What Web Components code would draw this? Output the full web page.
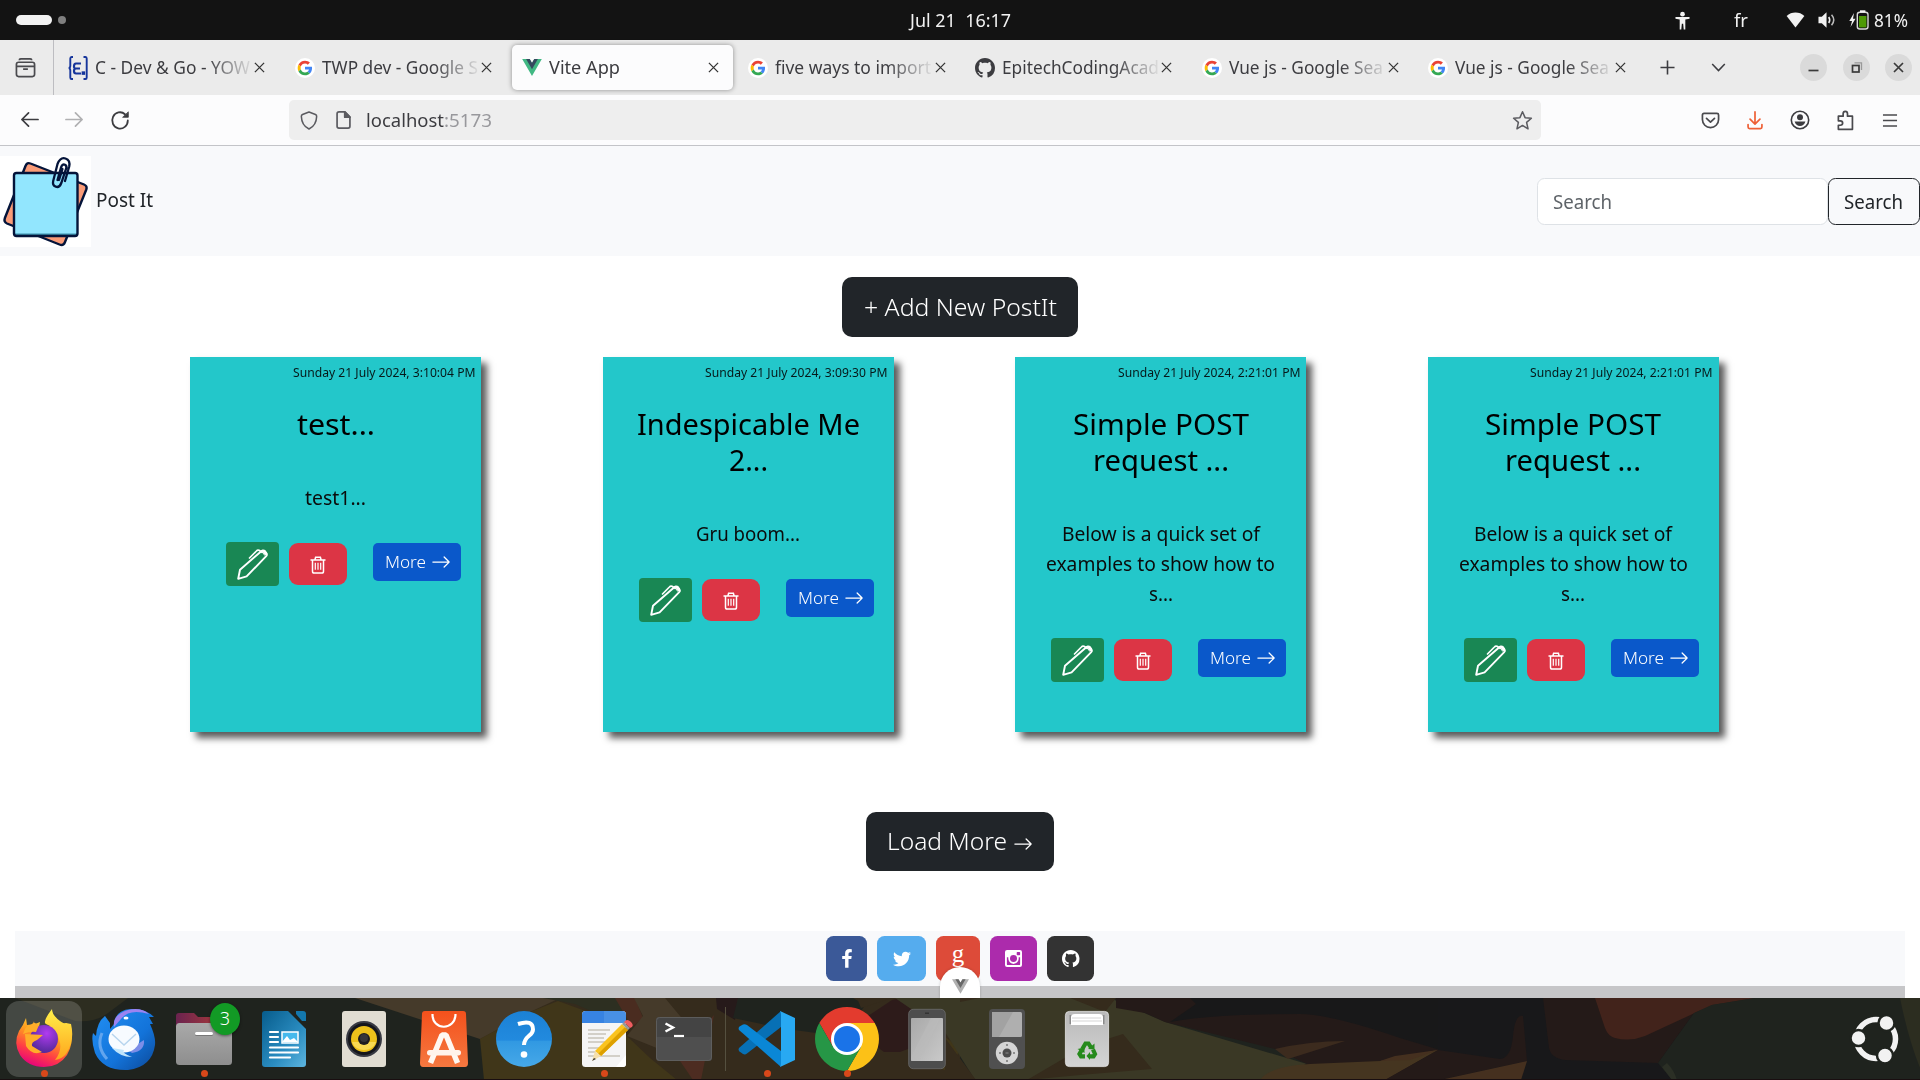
<!DOCTYPE html>
<html lang="en">
<head>
<meta charset="utf-8">
<title>Vite App</title>
<style>
html,body{margin:0;height:100%;overflow:hidden}
body{font-family:"Noto Sans","Open Sans",sans-serif;background:#fff}
</style>
</head>
<body>
<desktop-screen></desktop-screen>
<script>
const ICONS = {
  google: '<svg viewBox="0 0 24 24"><circle cx="12" cy="12" r="12" fill="#fff"/><g transform="translate(3.2 3.2) scale(.367)"><path fill="#EA4335" d="M24 9.5c3.54 0 6.71 1.22 9.21 3.6l6.85-6.85C35.9 2.38 30.47 0 24 0 14.62 0 6.51 5.38 2.56 13.22l7.98 6.19C12.43 13.72 17.74 9.5 24 9.5z"/><path fill="#4285F4" d="M46.98 24.55c0-1.57-.15-3.09-.38-4.55H24v9.02h12.94c-.58 2.96-2.26 5.48-4.78 7.18l7.73 6c4.51-4.18 7.09-10.36 7.09-17.65z"/><path fill="#FBBC05" d="M10.53 28.59c-.48-1.45-.76-2.99-.76-4.59s.27-3.14.76-4.59l-7.98-6.19C.92 16.46 0 20.12 0 24c0 3.88.92 7.54 2.56 10.78l7.97-6.19z"/><path fill="#34A853" d="M24 48c6.48 0 11.93-2.13 15.89-5.81l-7.73-6c-2.15 1.45-4.92 2.3-8.16 2.3-6.26 0-11.57-4.22-13.47-9.91l-7.98 6.19C6.51 42.62 14.62 48 24 48z"/></g></svg>',
  github: '<svg viewBox="0 0 16 16"><path fill="currentColor" d="M8 0C3.58 0 0 3.58 0 8c0 3.54 2.29 6.53 5.47 7.59.4.07.55-.17.55-.38 0-.19-.01-.82-.01-1.49-2.01.37-2.53-.49-2.69-.94-.09-.23-.48-.94-.82-1.13-.28-.15-.68-.52-.01-.53.63-.01 1.08.58 1.23.82.72 1.21 1.87.87 2.33.66.07-.52.28-.87.51-1.07-1.78-.2-3.64-.89-3.64-3.95 0-.87.31-1.59.82-2.15-.08-.2-.36-1.02.08-2.12 0 0 .67-.21 2.2.82.64-.18 1.32-.27 2-.27s1.36.09 2 .27c1.53-1.04 2.2-.82 2.2-.82.44 1.1.16 1.92.08 2.12.51.56.82 1.27.82 2.15 0 3.07-1.87 3.75-3.65 3.95.29.25.54.73.54 1.48 0 1.07-.01 1.93-.01 2.2 0 .21.15.46.55.38A8.01 8.01 0 0 0 16 8c0-4.42-3.58-8-8-8z"/></svg>',
  epitech: '<svg viewBox="0 0 20 24" fill="none" stroke="#16359b" stroke-width="1.9"><path d="M5 1H3.6Q2.300 1 2.300 2.600V9.400Q2.300 12 .6 12 2.300 12 2.300 14.600V21.400Q2.300 23 3.600 23H5M15.500 1H17.500Q18.700 1 18.700 2.600V21.400Q18.700 23 17.500 23H15.500"/><path d="M13 7.500H8Q6 7.500 6 10.200T8 12.500H12M8 12.500Q6 12.500 6 15T8 17.500H13" stroke-width="2.200"/><rect x="14.600" y="16.300" width="1.600" height="1.600"/></svg>',
  vue: '<svg viewBox="0 0 261.76 226.69"><path fill="#41b883" d="M161.096.001l-30.225 52.351L100.647.001H-.005l130.877 226.688L261.749.001z"/><path fill="#34495e" d="M161.096.001l-30.225 52.351L100.647.001H52.346l78.526 136.01L209.398.001z"/></svg>',
  vueGray: '<svg viewBox="0 0 261.76 226.69"><path fill="#b0b0b0" d="M161.096.001l-30.225 52.351L100.647.001H-.005l130.877 226.688L261.749.001z"/><path fill="#686868" d="M161.096.001l-30.225 52.351L100.647.001H52.346l78.526 136.01L209.398.001z"/></svg>',
  close: '<svg viewBox="0 0 12 12"><path d="M1 1l10 10M11 1L1 11" stroke="#333" stroke-width="1.4"/></svg>',
  archive: '<svg viewBox="0 0 22 22" fill="none" stroke="#4a4a4e" stroke-width="1.8"><path d="M4.500 3.300Q4.500 2 6 2H16Q17.500 2 17.500 3.300"/><rect x="1.500" y="5.500" width="19" height="15" rx="2.300"/><path d="M1.500 9.800H20.500M8.500 12.600H13.500"/></svg>',
  back: '<svg viewBox="0 0 20 20" fill="none" stroke="#3c3c40" stroke-width="1.8" stroke-linecap="round" stroke-linejoin="round"><path d="M19 10H2M9 3L2 10l7 7"/></svg>',
  forward: '<svg viewBox="0 0 20 20" fill="none" stroke="#b0b0b2" stroke-width="1.800" stroke-linecap="round" stroke-linejoin="round"><path d="M1 10h17M11 3l7 7-7 7"/></svg>',
  reload: '<svg viewBox="0 0 20 20" fill="none" stroke="#3c3c40" stroke-width="1.800" stroke-linecap="round"><path d="M15 4.200A7.800 8.200 0 1 0 17.800 10.500"/><path d="M18.300 2.200V7.300H13Z" fill="#3c3c40" stroke-width=".8" stroke-linejoin="round"/></svg>',
  shield: '<svg viewBox="0 0 20 22" fill="none" stroke="#5b5b60" stroke-width="1.700" stroke-linejoin="round"><path d="M10 1.500L17.200 4.300Q18.600 4.900 18.500 6.500C18.300 13 15 18 10 20.500 5 18 1.700 13 1.500 6.500Q1.400 4.900 2.800 4.300Z"/></svg>',
  page: '<svg viewBox="0 0 18 20" fill="none" stroke="#5b5b60" stroke-width="1.800" stroke-linejoin="round"><path d="M4 1.500H10.500L15.800 6.800V16.500Q15.800 18.500 13.800 18.500H4.200Q2.200 18.500 2.200 16.500V3.500Q2.200 1.500 4.200 1.500Z"/><path d="M10.300 1.500V7H15.800Z" fill="#5b5b60"/></svg>',
  star: '<svg viewBox="0 0 22 22" fill="none" stroke="#5b5b60" stroke-width="1.600" stroke-linejoin="round"><path d="M11 1.800L13.700 8 20.300 8.600 15.300 13 16.800 19.700 11 16.200 5.200 19.700 6.700 13 1.700 8.600 8.300 8Z"/></svg>',
  pocket: '<svg viewBox="0 0 20 20" fill="none" stroke="#4a4a4e" stroke-width="1.800" stroke-linecap="round" stroke-linejoin="round"><path d="M3.200 2.500H16.800Q18.500 2.500 18.500 4.200V9A8.500 8.500 0 0 1 1.500 9V4.200Q1.500 2.500 3.200 2.500Z"/><path d="M5.800 7.700L10 11.700 14.200 7.700"/></svg>',
  download: '<svg viewBox="0 0 20 22" fill="none" stroke="#ee6036" stroke-width="1.900" stroke-linecap="round" stroke-linejoin="round"><path d="M10 1.500V14.500M4.500 9.500L10 15 15.500 9.500M2.300 15.500V18.200Q2.300 20 4 20H16Q17.700 20 17.700 18.200V15.500"/></svg>',
  account: '<svg viewBox="0 0 20 20"><circle cx="10" cy="10" r="8.700" fill="none" stroke="#3c3c40" stroke-width="1.600"/><circle cx="10" cy="7.300" r="3" fill="#3c3c40"/><path d="M4.600 11.600H15.400Q14 16 10 16T4.600 11.600Z" fill="#3c3c40"/></svg>',
  ext: '<svg viewBox="0 0 20 22" fill="none" stroke="#4a4a4e" stroke-width="1.800" stroke-linejoin="round"><path d="M2.500 6.500H7.500V4Q7.500 1.300 9.800 1.300T12.100 4V6.500H17.300V20.300H2.500V16H4.500Q7 16 7 13.700T4.500 11.300H2.500Z"/></svg>',
  menu: '<svg viewBox="0 0 16 16"><path d="M.5 2.200H15.500M.5 8H15.500M.5 13.800H15.500" stroke="#4a4a4e" stroke-width="1.600"/></svg>',
  plus: '<svg viewBox="0 0 16 16"><path d="M8 .5V15.500M.5 8H15.500" stroke="#3c3c40" stroke-width="1.700"/></svg>',
  chevron: '<svg viewBox="0 0 16 10"><path d="M1 1.200L8 8.500 15 1.200" fill="none" stroke="#3c3c40" stroke-width="1.700"/></svg>',
  a11y: '<svg viewBox="0 0 16 20" fill="#f2f2f2"><circle cx="8" cy="3.200" r="2.500"/><path d="M.5 6.300H15.500V8.200L11 9V19.500H9.300L8.700 13.500H7.300L6.700 19.500H5V9L.5 8.200Z"/></svg>',
  wifi: '<svg viewBox="0 0 20 17"><path d="M10 16.500L.6 4.200Q4.600.6 10 .6T19.400 4.200Z" fill="#f2f2f2"/></svg>',
  volume: '<svg viewBox="0 0 19 18" fill="#f2f2f2"><path d="M.5 5.500H4L9 .7V17.300L4 12.500H.5Z"/><path d="M11.300 5.800Q13.500 9 11.300 12.200" fill="none" stroke="#f2f2f2" stroke-width="1.600"/><path d="M14.300 3.500Q19 9 14.300 14.500" fill="none" stroke="#bbb" stroke-width="1.600"/></svg>',
  battery: '<svg viewBox="0 0 20 20"><path d="M5 3L.3 11H3L1.500 17 6.500 8.800H4Z" fill="#f2f2f2"/><rect x="8.300" y="2.300" width="10.700" height="16.700" rx="2.500" fill="#131313" stroke="#d8d8d8" stroke-width="1.400"/><rect x="11" y=".3" width="5.400" height="2" fill="#f2f2f2"/><rect x="10" y="6" width="7.400" height="11.400" fill="#4e9a06"/></svg>',
  postit: '<svg viewBox="0 0 91 91"><rect width="91" height="91" fill="#fff"/><g stroke="#04143a" stroke-width="2.400" stroke-linejoin="round"><path d="M30.500 7.500L84 28.500Q87.500 30 86.300 33.500L65 86Q63.500 90 59.500 88.500L7 67.500Q3.500 66 4.900 62L25.500 10Q27 6 30.500 7.500Z" fill="#fa9c78"/></g><rect x="14" y="17" width="63.500" height="63" rx="2.500" fill="#92e6fe"/><path d="M14.500 78.300H77" stroke="#3d8fab" stroke-width="1.500"/><rect x="14" y="17" width="63.500" height="63" rx="2.500" fill="none" stroke="#04143a" stroke-width="2.400"/><g fill="none" stroke="#04143a" stroke-width="2.300" stroke-linecap="round"><path d="M57.500 24L61 11.500Q62.500 7.500 65 8.800T65.800 13.500L61.300 27Q59.500 32 55.800 30.700T53.200 25L57.500 8Q60.500.8 65.500 2.500T69.200 10.500L65 25M59 24L62.500 13"/></g></svg>',
  arrow: '<svg viewBox="0 0 16 16"><path fill="currentColor" fill-rule="evenodd" d="M1 8a.5.5 0 0 1 .5-.5h11.793L10.146 4.354a.5.5 0 1 1 .708-.708l4 4a.5.5 0 0 1 0 .708l-4 4a.5.5 0 0 1-.708-.708L13.293 8.500H1.500A.5.5 0 0 1 1 8z"/></svg>',
  pen: '<svg viewBox="0 0 31 31" fill="none" stroke="#fff" stroke-width="1.900" stroke-linejoin="round" stroke-linecap="round"><path d="M1.200 29.800L3 20.800 24.300 2.200Q26 .8 27.500 2.200L29.300 4Q30.500 5.600 29.200 7.200L9.600 27.400Z"/><path d="M25 3.300L22 1.300Q20.500.8 19.400 2L12.500 9" stroke-width="1.700"/><path d="M24.500 1.500L28 1.300 29.800 4.500 28 6Z" fill="#fff" stroke-width="1"/></svg>',
  trash: '<svg viewBox="0 0 16 18" fill="none" stroke="#fff" stroke-width="1.500"><path d="M.5 3.900H15.500M5 3.500L5.600 1.200H10.400L11 3.500M2.500 4V15.200Q2.500 17.100 4 17.100H12Q13.500 17.100 13.500 15.200V4"/><path d="M5.300 6.800V13.800M8 6.800V13.800M10.700 6.800V13.800" stroke-width="1.200"/></svg>',
  facebook: '<svg viewBox="0 0 10 19"><path fill="#fff" d="M9.800.2V3.200H8.100Q6.500 3.200 6.500 4.800V6.900H9.700L9.300 10.100H6.500V18.700H3.100V10.100H.2V6.900H3.100V4.500Q3.100 0 7.400 0Q9 0 9.800.2Z"/></svg>',
  twitter: '<svg viewBox="0 0 512 512"><path fill="#fff" d="M459.370 151.716c.325 4.548.325 9.097.325 13.645 0 138.720-105.583 298.558-298.558 298.558-59.452 0-114.680-17.219-161.137-47.106 8.447.974 16.568 1.299 25.340 1.299 49.055 0 94.213-16.568 130.274-44.832-46.132-.975-84.792-31.188-98.112-72.772 6.498.974 12.995 1.624 19.818 1.624 9.421 0 18.843-1.300 27.614-3.573-48.081-9.747-84.143-51.980-84.143-102.985v-1.299c13.969 7.797 30.214 12.670 47.431 13.319-28.264-18.843-46.781-51.005-46.781-87.391 0-19.492 5.197-37.360 14.294-52.954 51.655 63.675 129.300 105.258 216.365 109.807-1.624-7.797-2.599-15.918-2.599-24.040 0-57.828 46.782-104.934 104.934-104.934 30.213 0 57.502 12.670 76.670 33.137 23.715-4.548 46.456-13.320 66.599-25.340-7.798 24.366-24.366 44.833-46.132 57.827 21.117-2.273 41.584-8.122 60.426-16.243-14.292 20.791-32.161 39.308-52.628 54.253z"/></svg>',
  instagram: '<svg viewBox="0 0 18 18"><path fill="#fff" fill-rule="evenodd" d="M2.200 0H15.800Q18 0 18 2.200V15.800Q18 18 15.800 18H2.200Q0 18 0 15.800V2.200Q0 0 2.200 0ZM2 7.600V15Q2 16 3 16H15Q16 16 16 15V7.600H14.500Q15 13.800 9 14.700 3 13.800 3.500 7.600ZM13.100 2H15.300Q16 2 16 2.700V4.800Q16 5.500 15.300 5.500H13.100Q12.400 5.500 12.400 4.800V2.700Q12.400 2 13.100 2Z"/><circle cx="9" cy="9" r="4.700" fill="#fff"/><circle cx="9" cy="9" r="3.700" fill="#ac2bac"/></svg>',
  firefox: '<svg viewBox="0 0 64 64"><defs><linearGradient id="a" x1=".75" y1="0" x2=".3" y2="1"><stop offset="0" stop-color="#ffe93e"/><stop offset=".4" stop-color="#ff9a1f"/><stop offset=".72" stop-color="#ff3b47"/><stop offset="1" stop-color="#e4007f"/></linearGradient><radialGradient id="b" cx=".6" cy=".3" r=".8"><stop offset="0" stop-color="#b13bf0"/><stop offset="1" stop-color="#45278d"/></radialGradient><linearGradient id="c" x1="0" y1="0" x2="0" y2="1"><stop offset="0" stop-color="#fff04a"/><stop offset="1" stop-color="#ffa51c"/></linearGradient></defs><path fill="url(#a)" d="M14 11L15 18Q18 17 21 19 24 16 28 15L27 20 45 18 54 16 59 22Q62 36 55 48 47 60 32 60 16 60 8 48 1 36 7 24Q11 19 14 11Z"/><path fill="url(#c)" d="M40 2Q40 8 48 14 54 18 54 16L59 17Q63 34 54 47 50 52 43 53 51 43 47 32 43 20 34 17 30 15 40 2Z"/><circle cx="32" cy="32" r="14" fill="url(#b)"/><path fill="#ffad29" d="M11 27Q18 24 24 25L27 18 21 15Q24 14 20 17 15 18 13 22ZM13 27L31 28 25 33Q19 35 20 39 25 42 30 45 20 49 14 39Z"/></svg>',
  thunderbird: '<svg viewBox="0 0 64 64"><defs><linearGradient id="a" x1="0" y1="0" x2="1" y2="1"><stop offset="0" stop-color="#2290f4"/><stop offset=".6" stop-color="#1373d9"/><stop offset="1" stop-color="#0c4898"/></linearGradient></defs><path d="M22 17Q23 3 39 2 53 1 62 10L57 10 61 17 58 17Q64 30 63 38 60 60 36 63 11 64 3 46-1 34 1 26L4 29Q5 15 13 9L18 16 18 22Z" fill="url(#a)"/><path d="M22 20Q20 8 36 3 49 0 57 7 37 1 29 12Z" fill="#9b83f1"/><path d="M10 26Q4 40 15 52" fill="none" stroke="#62a5ee" stroke-width="3"/><path d="M52 33Q53 44 40 46L36 43" fill="#7c8ee8"/><ellipse cx="32" cy="32" rx="15.500" ry="13.500" fill="#f7fbff"/><path d="M20 41Q28 50 40 50 29 46 32 43Z" fill="#c0e5fb"/><path d="M20 27L32 38 44 27" stroke="#b7d5ee" stroke-width="1.500" fill="none"/><ellipse cx="34" cy="11" rx="2.500" ry="1.500" fill="#fff"/></svg>',
  files: '<svg viewBox="0 0 64 64"><defs><linearGradient id="a"><stop stop-color="#6a234f"/><stop offset="1" stop-color="#b83f35"/></linearGradient><linearGradient id="b" x1="0" y1="0" x2="0" y2="1"><stop stop-color="#a9a9a9"/><stop offset="1" stop-color="#8e8e8e"/></linearGradient></defs><path d="M4 9Q4 6 7 6H22L26 10H57Q60 10 60 13V30H4Z" fill="url(#a)"/><rect x="4" y="16" width="56" height="42" rx="3.500" fill="url(#b)"/><rect x="23" y="26" width="18" height="3" rx="1.500" fill="#777"/><rect x="23" y="25" width="18" height="3" rx="1.500" fill="#fff"/></svg>',
  writer: '<svg viewBox="0 0 64 64"><defs><linearGradient id="a" x1="0" y1="0" x2="1" y2="1"><stop stop-color="#075c8c"/><stop offset=".6" stop-color="#2a8cc0"/><stop offset="1" stop-color="#5db5df"/></linearGradient></defs><path d="M13 4H36L54 22V57Q54 60 51 60H13Q10 60 10 57V7Q10 4 13 4Z" fill="url(#a)"/><path d="M44 4H51Q54 4 54 7V14H50L44 7Z" fill="#1377ad"/><path d="M18 25H26M18 30H26M18 35H26M18 40.500H46M18 45.500H46M18 50.500H38" stroke="#fff" stroke-width="2.200" stroke-linecap="round"/><rect x="30" y="25" width="16" height="11" fill="#45b9ec" stroke="#fff" stroke-width="1.500"/><path d="M30 35L35 29 38 33 42 31 46 35Z" fill="#fff"/></svg>',
  rhythm: '<svg viewBox="0 0 64 64"><rect x="10" y="4" width="44" height="56" rx="3" fill="#e1ddd2"/><circle cx="32" cy="32" r="18" fill="#383a43"/><circle cx="32" cy="32" r="16" fill="#15161c"/><circle cx="32" cy="32" r="13" fill="#edc11b"/><path d="M20 35A13 13 0 0 0 44 35" fill="#f8d952"/><circle cx="32" cy="32" r="6" fill="#1d1c20"/><circle cx="32" cy="31" r="4" fill="#35353a"/></svg>',
  appcenter: '<svg viewBox="0 0 64 64"><defs><linearGradient id="a" x1="0" y1="0" x2="0" y2="1"><stop stop-color="#f4511c"/><stop offset="1" stop-color="#f57840"/></linearGradient></defs><path d="M13 4H51Q54 4 54 7L56 56Q56 60 53 60H11Q8 60 8 56L10 7Q10 4 13 4Z" fill="url(#a)"/><path d="M20.500 7C20 24 43.500 24 43.500 7" fill="none" stroke="#fff" stroke-width="2.200"/><path d="M18.500 56L30 28H34L45.500 56" fill="none" stroke="#fff7f1" stroke-width="5.500" stroke-linejoin="bevel"/><rect x="15" y="43" width="34" height="5.500" rx="2.700" fill="#fff3eb"/></svg>',
  help: '<svg viewBox="0 0 64 64"><defs><linearGradient id="a" x1="0" y1="0" x2="0" y2="1"><stop stop-color="#1b81d5"/><stop offset=".52" stop-color="#228ade"/><stop offset=".54" stop-color="#3199e2"/><stop offset="1" stop-color="#46a8e8"/></linearGradient></defs><circle cx="32" cy="32" r="28" fill="url(#a)"/><path d="M26 17Q41 12 41 22.500C41 29 32 29 32 38" fill="none" stroke="#fff" stroke-width="4" stroke-linecap="butt"/><circle cx="32" cy="47.500" r="3.300" fill="#fff"/></svg>',
  editor: '<svg viewBox="0 0 64 64"><rect x="10" y="4" width="44" height="56" rx="3.500" fill="#f5f5f5"/><path d="M10 16V7.500Q10 4 13.500 4H32V16Z" fill="#3783e2"/><path d="M32 4H50.500Q54 4 54 7.500V16H32Z" fill="#4890e5"/><path d="M16 23H38M16 27H34M16 31H32M16 35H34M16 41H27M16 45H24M16 49H48" stroke="#c8c4b9" stroke-width="1.700"/><path d="M54 48L44 60H51Q54 60 54 57Z" fill="#fff"/><path d="M23 44L50 17 56 23 29 49Z" fill="#fac31f"/><path d="M26 47L53 20 56 23 29 49Z" fill="#dda000"/><path d="M23 44L29 49 20 54Z" fill="#f5dfac"/><path d="M22 51L20 54 24 52Z" fill="#333"/><path d="M50 17L56 23 58 21 52 15Z" fill="#999"/><path d="M52 15Q55 11 59 15T58 21Z" fill="#ef5d60"/></svg>',
  terminal: '<svg viewBox="0 0 64 64"><rect x="4" y="10" width="56" height="44" rx="3.500" fill="#4f4f4f"/><path d="M4 13.500Q4 10 7.500 10H56.500Q60 10 60 13.500V30H4Z" fill="#444"/><rect x="4.500" y="10.500" width="55" height="43" rx="3.200" fill="none" stroke="#626262" stroke-width=".8"/><path d="M13.500 16.500L21 20.500 13.500 24.500" fill="none" stroke="#fff" stroke-width="2.400"/><path d="M22 29H32" stroke="#fff" stroke-width="2.200"/></svg>',
  vscode: '<svg viewBox="0 0 64 64"><path d="M46 4L4 41Q3 43 4.500 44.500L8 47Q10 48 12 46.500L46 20Z" fill="#0770b5"/><path d="M46 60L4 23Q3 21 4.500 19.500L8 17.500Q10 17 12 18L46 44Z" fill="#0a87d6"/><path d="M45 4L60 11V53L45 60Q46 59 46 56V8Q46 5 45 4Z" fill="#28a9f2"/></svg>',
  chrome: '<svg viewBox="0 0 64 64"><path d="M32 16H59.700A32 32 0 0 0 4.300 16L18.100 40Z" fill="#e33b2e"/><path d="M32 16H59.700A32 32 0 0 1 32 64L45.900 40Z" fill="#fcc117"/><path d="M45.900 40L32 64A32 32 0 0 1 4.300 16L18.100 40Z" fill="#269646"/><circle cx="32" cy="32" r="16" fill="#fff"/><circle cx="32" cy="32" r="13" fill="#1a73e8"/></svg>',
  phone: '<svg viewBox="0 0 64 64"><defs><linearGradient id="a" x1="0" y1="0" x2="1" y2="1"><stop stop-color="#a9a9a9"/><stop offset="1" stop-color="#c9c9c9"/></linearGradient></defs><rect x="13.700" y="2.300" width="36.600" height="59.400" rx="4.500" fill="#4d4d4d" stroke="#6b6b6b" stroke-width=".8"/><rect x="16" y="11" width="32" height="43" rx="1" fill="url(#a)"/><path d="M36 11H45L24 54H16V50Z" fill="#bcbcbc" opacity=".55"/><rect x="30" y="5.500" width="4" height="1.500" fill="#333"/></svg>',
  ipod: '<svg viewBox="0 0 64 64"><rect x="14" y="2" width="36" height="60" rx="4" fill="#505050"/><rect x="17" y="5" width="30" height="25" rx="1.500" fill="#afafaf"/><path d="M17 5H38L24 30H17Z" fill="#a2a2a2"/><circle cx="32" cy="46" r="11.200" fill="#d5d5d5"/><circle cx="32" cy="46" r="4.500" fill="#4d4d4d"/><path d="M31 38H33M31 54H33M24 46H26M38 46H40M30.500 46H33.500" stroke="#777" stroke-width="1.700"/></svg>',
  trashcan: '<svg viewBox="0 0 64 64"><defs><linearGradient id="a" x1="0" y1="0" x2="0" y2="1"><stop stop-color="#b9b9b9"/><stop offset="1" stop-color="#d4d4d4"/></linearGradient></defs><rect x="10.400" y="4.400" width="43.200" height="55.200" rx="4" fill="url(#a)" stroke="#e6e6e6" stroke-width=".8"/><path d="M14.500 8H49.500V17H14.500Z" fill="#8b8b8b"/><path d="M16 18V10Q16 7 20 7H44Q48 7 48 10V18Z" fill="#fff"/><path d="M17 11H46M17 14H47" stroke="#d5d5d5" stroke-width="1"/><g fill="none" stroke="#268a1c" stroke-width="4.200"><path d="M27.300 42L30.500 36.500H33.500L36 40.500"/><path d="M38 42.500L40 47 38.500 49.300H34"/><path d="M30 49.300H26L24.500 47 27 42.500"/></g><g fill="#268a1c"><path d="M33 42L39.500 42.500 39.500 36.500Z"/><path d="M35 45V53L31.500 49Z"/><path d="M22.500 42L29.500 40.500 29.500 46Z"/></g></svg>',
  ubuntu: '<svg viewBox="0 0 50 48"><circle cx="25" cy="24" r="19.500" fill="none" stroke="#f2f2f2" stroke-width="5.500"/><g fill="#f2f2f2" stroke="#1f231e" stroke-width="2.500"><circle cx="7.500" cy="23" r="8"/><circle cx="35.500" cy="8" r="8"/><circle cx="34" cy="40.500" r="8"/></g></svg>'
};

class BaseElement extends HTMLElement {
  connectedCallback() {
    if (this.shadowRoot) return;
    this.attachShadow({ mode: 'open' }).innerHTML = this.render();
  }
}

class UiIcon extends BaseElement {
  render() {
    const w = this.getAttribute('w'), h = this.getAttribute('h') || w;
    return `<style>:host{display:block;flex:none;width:${w}px;height:${h}px}svg{display:block;width:100%;height:100%;overflow:visible}</style>${ICONS[this.getAttribute('name')]}`;
  }
}

/* A single line of text set to an exact measure. */
class FitText extends BaseElement {
  render() {
    return '<style>:host{display:block;flex:none;white-space:nowrap}span{display:inline-block;transform-origin:0 50%}</style><span><slot></slot></span>';
  }
  connectedCallback() {
    super.connectedCallback();
    const span = this.shadowRoot.querySelector('span');
    const w = +this.getAttribute('w');
    this.style.width = w + 'px';
    const natural = span.getBoundingClientRect().width;
    if (natural) span.style.transform = `scaleX(${w / natural})`;
  }
}

class TopBar extends BaseElement {
  render() {
    return `<style>
      :host{display:grid;grid-template-columns:1fr auto 1fr;align-items:center;height:40px;background:#131313;color:#f2f2f2;font-size:18px;line-height:38px;flex:none}
      .l{display:flex;align-items:center;gap:6px;padding-left:16px}
      .pill{width:36px;height:10px;border-radius:5px;background:#f2f2f2}.dot{width:8px;height:8px;border-radius:50%;background:#808080}
      .r{display:flex;align-items:center;justify-content:flex-end;padding-right:12px}
      fit-text{margin-top:-1px}
    </style><div class="l"><div class="pill"></div><div class="dot"></div></div>
    <fit-text w="101" style="white-space:pre">Jul 21  16:17</fit-text>
    <div class="r"><ui-icon name="a11y" w="15" h="19"></ui-icon><fit-text w="14" style="margin:-1px 38px 0 44px">fr</fit-text><ui-icon name="wifi" w="19" h="16"></ui-icon><ui-icon name="volume" w="18" h="18" style="margin:0 13px"></ui-icon><ui-icon name="battery" w="20" h="20"></ui-icon><fit-text w="34" style="margin-left:5px">81%</fit-text></div>`;
  }
}

class BrowserTab extends BaseElement {
  render() {
    const a = this.hasAttribute('active');
    return `<style>
      :host{display:flex;align-items:center;box-sizing:border-box;width:220.700px;height:45px;margin:0 3px;padding:0 14px 0 9.500px;border-radius:5px;font-size:18.200px;line-height:42px;color:#3c3c40;flex:none;${a ? 'background:#fcfcfd;box-shadow:0 0 5px rgba(0,0,0,.4)' : ''}}
      .t{width:157px;margin:-1px 0 0 7px;overflow:hidden;${a ? '' : '-webkit-mask-image:linear-gradient(90deg,#000 112px,transparent 160px);mask-image:linear-gradient(90deg,#000 112px,transparent 160px)'}}
      .c{margin-left:auto}
    </style><ui-icon name="${this.getAttribute('icon')}" w="20" h="${this.getAttribute('ih') || 24}"></ui-icon>
    <div class="t"><fit-text w="${this.getAttribute('w')}">${this.getAttribute('label')}</fit-text></div><ui-icon class="c" name="close" w="11"></ui-icon>`;
  }
}

class TabStrip extends BaseElement {
  render() {
    return `<style>
      :host{display:flex;align-items:center;height:55px;background:#ebebeb;flex:none}
      .first{width:54px;height:55px;border-right:1px solid #bdbdc1;display:flex;align-items:center;justify-content:center;box-sizing:border-box;margin-right:1.800px;padding-right:3px}
      .win{display:flex;gap:15.500px;margin-left:auto;padding-right:8px}
      .b{width:27px;height:27px;border-radius:50%;background:#dadada}
      svg{display:block;width:27px;height:27px;fill:none;stroke:#3a3a3a;stroke-width:1.700}
    </style><div class="first"><ui-icon name="archive" w="21"></ui-icon></div>
    <browser-tab icon="epitech" label="C - Dev &amp; Go - YOW" w="155"></browser-tab>
    <browser-tab icon="google" ih="20" label="TWP dev - Google S" w="156"></browser-tab>
    <browser-tab icon="vue" ih="17" label="Vite App" w="71" active></browser-tab>
    <browser-tab icon="google" ih="20" label="five ways to import" w="156"></browser-tab>
    <browser-tab icon="github" ih="20" label="EpitechCodingAcad" w="157"></browser-tab>
    <browser-tab icon="google" ih="20" label="Vue js - Google Sea" w="154"></browser-tab>
    <browser-tab icon="google" ih="20" label="Vue js - Google Sea" w="154"></browser-tab>
    <ui-icon name="plus" w="15" style="margin-left:17px"></ui-icon><ui-icon name="chevron" w="15" h="9" style="margin-left:36px"></ui-icon>
    <div class="win"><div class="b"><svg viewBox="0 0 27 27"><path d="M8.500 16.500H18.500"/></svg></div>
    <div class="b"><svg viewBox="0 0 27 27"><rect x="9.500" y="11.500" width="6.500" height="6.500"/><path d="M11.500 8.800H18.500V16" stroke="#999" stroke-width="1.300"/></svg></div>
    <div class="b"><svg viewBox="0 0 27 27"><path d="M9 9L18 18M18 9L9 18"/></svg></div></div>`;
  }
}

class NavBar extends BaseElement {
  render() {
    return `<style>
      :host{display:flex;align-items:center;height:50px;background:#fcfcfd;border-bottom:1px solid #c3c4c8;padding:0 22px 0 20px;flex:none}
      .nav{display:flex;gap:26px;width:269px}
      .url{display:flex;align-items:center;width:1252px;height:40px;background:#eee;border-radius:5px;box-sizing:border-box;padding:0 8px 0 11px;font-size:18.200px;line-height:39px;color:#3c3c40}
      .star{margin-left:auto}
      .tools{display:flex;align-items:center;gap:26px;margin-left:auto}
    </style><div class="nav"><ui-icon name="back" w="19"></ui-icon><ui-icon name="forward" w="19"></ui-icon><ui-icon name="reload" w="20"></ui-icon></div>
    <div class="url"><ui-icon name="shield" w="18" h="21"></ui-icon><ui-icon name="page" w="17" h="20" style="margin:0 14px 0 17px"></ui-icon><fit-text w="78">localhost</fit-text><fit-text w="48" style="color:#98989c">:5173</fit-text><ui-icon class="star" name="star" w="21"></ui-icon></div>
    <div class="tools"><ui-icon name="pocket" w="19"></ui-icon><ui-icon name="download" w="18" h="21"></ui-icon><ui-icon name="account" w="20"></ui-icon><ui-icon name="ext" w="19" h="21"></ui-icon><ui-icon name="menu" w="16" h="15" style="margin-left:1.500px"></ui-icon></div>`;
  }
}

class SiteHeader extends BaseElement {
  render() {
    return `<style>
      :host{display:flex;align-items:center;height:110px;background:#f8f9fb;font-size:19.700px;line-height:30px;color:#212529;flex:none}
      .input{box-sizing:border-box;width:291px;height:47px;border:1px solid #dee2e6;border-radius:7.500px;background:#fff;padding:8px 15px;color:#5f6469;margin-left:auto}
      .btn{box-sizing:border-box;width:92px;height:47px;border:1px solid #212529;border-radius:7.500px;padding:8px 15px}
    </style><ui-icon name="postit" w="91"></ui-icon><fit-text w="57" style="margin:-2px 0 0 5px">Post It</fit-text>
    <div class="input"><fit-text w="59">Search</fit-text></div><div class="btn"><fit-text w="59">Search</fit-text></div>`;
  }
}

class DarkButton extends BaseElement {
  render() {
    return `<style>:host{display:flex;align-items:center;justify-content:center;box-sizing:border-box;border-radius:10px;background:#212529;color:#fff;font-size:24.600px;font-weight:300;line-height:38px;flex:none}</style><slot></slot>`;
  }
}

class PostCard extends BaseElement {
  render() {
    const lines = (attr) => this.getAttribute(attr).split('|').map(s => {
      const [t, w] = s.split('~');
      return `<fit-text w="${w}">${t}</fit-text>`;
    }).join('');
    return `<style>
      :host{display:flex;flex-direction:column;width:291px;height:375px;background:#23c7ca;box-shadow:6px 6px 7px rgba(0,0,0,.65);color:#0b0b0b;flex:none}
      .d{display:flex;justify-content:flex-end;padding:6px 6px 0 0;font-size:12.300px;line-height:19px;color:#06191a}
      .h,.p{display:flex;flex-direction:column;align-items:center}
      .h{margin-top:24px;font-size:29.400px;line-height:36px;font-weight:400;color:#000}
      .p{margin-top:41px;font-size:19.500px;line-height:30px}
      .b{display:flex;margin:29px 0 0 36px;align-items:flex-start}
      .b div{display:flex;align-items:center;justify-content:center;color:#fff}
      .e{width:53px;height:44px;border-radius:4px;background:#198754}
      .x{width:58px;height:42px;border-radius:9px;background:#dc3545;margin:1px 26px 0 10px}
      .x ui-icon{margin-top:2px}
      .b .m{width:88px;height:38px;box-sizing:border-box;justify-content:flex-start;padding-left:12px;border-radius:5px;background:#0a58ca;margin-top:1px;font-size:17.300px;font-weight:300;line-height:36px;gap:5px}
    </style><div class="d"><fit-text w="182.500">${this.getAttribute('date')}</fit-text></div>
    <div class="h">${lines('heading')}</div><div class="p">${lines('text')}</div>
    <div class="b"><div class="e"><ui-icon name="pen" w="31"></ui-icon></div><div class="x"><ui-icon name="trash" w="16" h="18"></ui-icon></div><div class="m"><fit-text w="41">More</fit-text><ui-icon name="arrow" w="20"></ui-icon></div></div>`;
  }
}

class SocialButton extends BaseElement {
  render() {
    return `<style>:host{display:flex;align-items:center;justify-content:center;height:45px;border-radius:7.500px;color:#fff;flex:none}</style><slot></slot>`;
  }
}

class SiteFooter extends BaseElement {
  render() {
    return `<style>
      :host{display:block;margin:0 15px;position:relative;flex:none}
      .s{display:flex;justify-content:center;gap:10px;height:55px;padding-top:5px;box-sizing:border-box;background:#f8f9fb}
      .c{height:12px;background:#c6c6c8}
      .v{position:absolute;left:925px;top:36px;width:40px;height:31px;border-radius:20px 20px 0 0;background:#fff;box-shadow:0 0 3px rgba(0,0,0,.2);display:flex;justify-content:center;padding-top:12px;box-sizing:border-box;clip-path:inset(-4px -4px 0 -4px)}
      .g{font:25px/30px "Liberation Serif",serif;margin-top:-10px}
    </style><div class="s">
      <social-button style="width:41px;background:#3b5998"><ui-icon name="facebook" w="10" h="19"></ui-icon></social-button>
      <social-button style="width:49px;background:#55acee"><ui-icon name="twitter" w="18"></ui-icon></social-button>
      <social-button style="width:44px;background:#dd4b39"><span class="g">g</span></social-button>
      <social-button style="width:47px;background:#ac2bac"><ui-icon name="instagram" w="17"></ui-icon></social-button>
      <social-button style="width:47px;background:#333"><ui-icon name="github" w="17.500"></ui-icon></social-button>
    </div><div class="c"></div><div class="v"><ui-icon name="vueGray" w="17" h="15"></ui-icon></div>`;
  }
}

class DockItem extends BaseElement {
  render() {
    const s = +this.getAttribute('size') || 64;
    return `<style>
      :host{display:flex;width:80px;height:82px;align-items:center;justify-content:center;position:relative;flex:none}
      .t{width:76px;height:76px;border-radius:13px;display:flex;align-items:center;justify-content:center;${this.hasAttribute('focused') ? 'background:rgba(255,255,255,.17)' : ''}}
      .dot{position:absolute;left:36.500px;top:72px;width:7px;height:7px;border-radius:50%;background:#d9481a}
      .n{position:absolute;left:46px;top:5px;width:30px;height:32px;border-radius:50%;background:#129a25;color:#fff;font-size:18px;font-weight:300;line-height:31px;text-align:center;box-shadow:0 1px 3px rgba(0,0,0,.5)}
    </style><div class="t"><ui-icon name="${this.getAttribute('icon')}" w="${s}"></ui-icon></div>
    ${this.hasAttribute('running') ? '<div class="dot"></div>' : ''}${this.hasAttribute('count') ? `<div class="n">${this.getAttribute('count')}</div>` : ''}`;
  }
}

class AppDock extends BaseElement {
  render() {
    return `<style>
      :host{display:flex;align-items:center;height:82px;position:relative;background:#1f231e;padding-left:4px;flex:none;overflow:hidden}
      .w{position:absolute;inset:0;width:1920px;height:82px}
      .sep{width:1px;height:64px;background:#55503f;margin:0 1px;position:relative}
      .u{margin-left:auto;margin-right:19px;position:relative}
    </style><svg class="w" viewBox="0 0 1920 82">
      <path fill="#2d2d20" d="M15 0H128L108 15Q95 25 75 23Z"/>
      <path fill="#352b1c" d="M480 0H960V82H480Z"/>
      <path fill="#453a2a" d="M355 0H560L530 14 480 41Z"/>
      <path fill="#1f231e" d="M478 41L482 41 485 82H478Z"/>
      <path fill="#403619" d="M480 41L530 14 558 3 610 22 650 60 677 82H484Z"/>
      <path fill="#2d2f21" d="M543 0H617L628 20 600 17 575 6Z"/>
      <path fill="#4a2c20" d="M615 0H635L643 20 632 29Z"/>
      <path fill="#453a2a" d="M634 0H665L690 30 674 57 627 38 643 18Z"/>
      <path fill="#4d2c21" d="M678 60L714 17 701 82H693Z"/>
      <path fill="#261a1a" d="M716 0H738L735 22 717 11Z"/>
      <path fill="#1f231e" d="M738 0H853L865 7 845 39 780 30 733 20Z"/>
      <path fill="#352b1c" d="M857 0H892L861 10Z"/>
      <path fill="#2d1b1a" d="M892 2Q915-5 945 37L900 54H884L862 38 850 30Z"/>
      <path fill="#403619" d="M938 34L960 50 950 75 925 62Z"/>
      <path fill="#3a3825" d="M895 0H1110L1165 24 1307 66 1262 82H975L945 34Z"/>
      <path fill="#352b1c" d="M960 0H980L960 4ZM1116 0H1070L1105 14ZM1123 36L1152 71 1080 77 1027 82 1085 48ZM945 40L976 82H945Z"/>
      <path fill="#241a18" d="M1116 0H1440V82H1262L1307 66 1275 51 1165 24 1145 15 1116 10Z"/>
      <path fill="#181819" d="M1170 24L1196 6 1190 0H1440V52L1400 40Q1330 16 1300 16Q1210 16 1170 24Z"/>
      <path fill="#3c2b1e" d="M1275 51Q1310 43 1345 43L1288 61Z"/>
      <path fill="#453520" d="M1260 82Q1270 68 1310 66L1380 63 1438 52 1385 82Z"/>
      <path fill="#45301f" d="M1438 52L1395 58 1380 63 1410 62Z"/>
      <path fill="#18181a" d="M1438 0H1700V82H1438Z"/>
      <path fill="#241a18" d="M1438 52L1500 61Q1511 60 1513 38T1523 18L1527 63 1440 82H1385ZM1543 0H1720L1694 15 1658 65 1565 62Q1551 60 1549 50Z"/>
      <path fill="#45301f" d="M1440 82L1527 63 1521 82Z"/>
      <path fill="#42231b" d="M1595 0H1755L1712 7 1645 38Q1630 44 1615 40 1608 38 1605 30Z"/>
      <path fill="#1f231e" d="M1694 15L1712 7 1755 0H1900L1920 70V82H1672L1658 65Z"/>
      <path fill="#2c2d20" d="M1900 0H1920V70Q1908 40 1900 0Z"/>
      <path fill="#2b2f25" d="M1662 69L1667 65Q1674 72 1677 82H1672Z"/>
      <path fill="#190e10" d="M0 81H1920V82H0Z"/>
    </svg>
    <dock-item icon="firefox" focused running></dock-item><dock-item icon="thunderbird"></dock-item><dock-item icon="files" count="3" running></dock-item><dock-item icon="writer"></dock-item><dock-item icon="rhythm"></dock-item><dock-item icon="appcenter"></dock-item><dock-item icon="help"></dock-item><dock-item icon="editor" running></dock-item><dock-item icon="terminal"></dock-item><div class="sep"></div><dock-item icon="vscode" running></dock-item><dock-item icon="chrome" running></dock-item><dock-item icon="phone"></dock-item><dock-item icon="ipod"></dock-item><dock-item icon="trashcan"></dock-item>
    <ui-icon class="u" name="ubuntu" w="50" h="48"></ui-icon>`;
  }
}

class DesktopScreen extends BaseElement {
  render() {
    return `<style>
      :host{display:flex;flex-direction:column;width:1920px;height:1080px;overflow:hidden}
      main{display:flex;flex-direction:column;align-items:center;height:675px;flex:none;background:#fff}
      .cards{display:flex;gap:121.600px;margin-top:20px;padding-right:11px}
    </style><top-bar></top-bar><tab-strip></tab-strip><nav-bar></nav-bar><site-header></site-header>
    <main><dark-button style="width:236px;height:60px;margin-top:21px"><fit-text w="193">+ Add New PostIt</fit-text></dark-button>
    <div class="cards">
      <post-card date="Sunday 21 July 2024, 3:10:04 PM" heading="test...~78" text="test1...~61"></post-card>
      <post-card date="Sunday 21 July 2024, 3:09:30 PM" heading="Indespicable Me~223|2...~39" text="Gru boom...~104"></post-card>
      <post-card date="Sunday 21 July 2024, 2:21:01 PM" heading="Simple POST~176|request ...~136" text="Below is a quick set of~198|examples to show how to~229|s...~24"></post-card>
      <post-card date="Sunday 21 July 2024, 2:21:01 PM" heading="Simple POST~176|request ...~136" text="Below is a quick set of~198|examples to show how to~229|s...~24"></post-card>
    </div>
    <dark-button style="width:188px;height:59px;margin-top:80px"><fit-text w="120" style="margin-top:-2px">Load More</fit-text><ui-icon name="arrow" w="20" style="margin:4px 0 0 6px"></ui-icon></dark-button></main>
    <site-footer></site-footer><app-dock></app-dock>`;
  }
}

customElements.define('desktop-screen', DesktopScreen);
customElements.define('top-bar', TopBar);
customElements.define('tab-strip', TabStrip);
customElements.define('browser-tab', BrowserTab);
customElements.define('nav-bar', NavBar);
customElements.define('site-header', SiteHeader);
customElements.define('dark-button', DarkButton);
customElements.define('post-card', PostCard);
customElements.define('social-button', SocialButton);
customElements.define('site-footer', SiteFooter);
customElements.define('dock-item', DockItem);
customElements.define('app-dock', AppDock);
customElements.define('ui-icon', UiIcon);
customElements.define('fit-text', FitText);
</script>
</body>
</html>
